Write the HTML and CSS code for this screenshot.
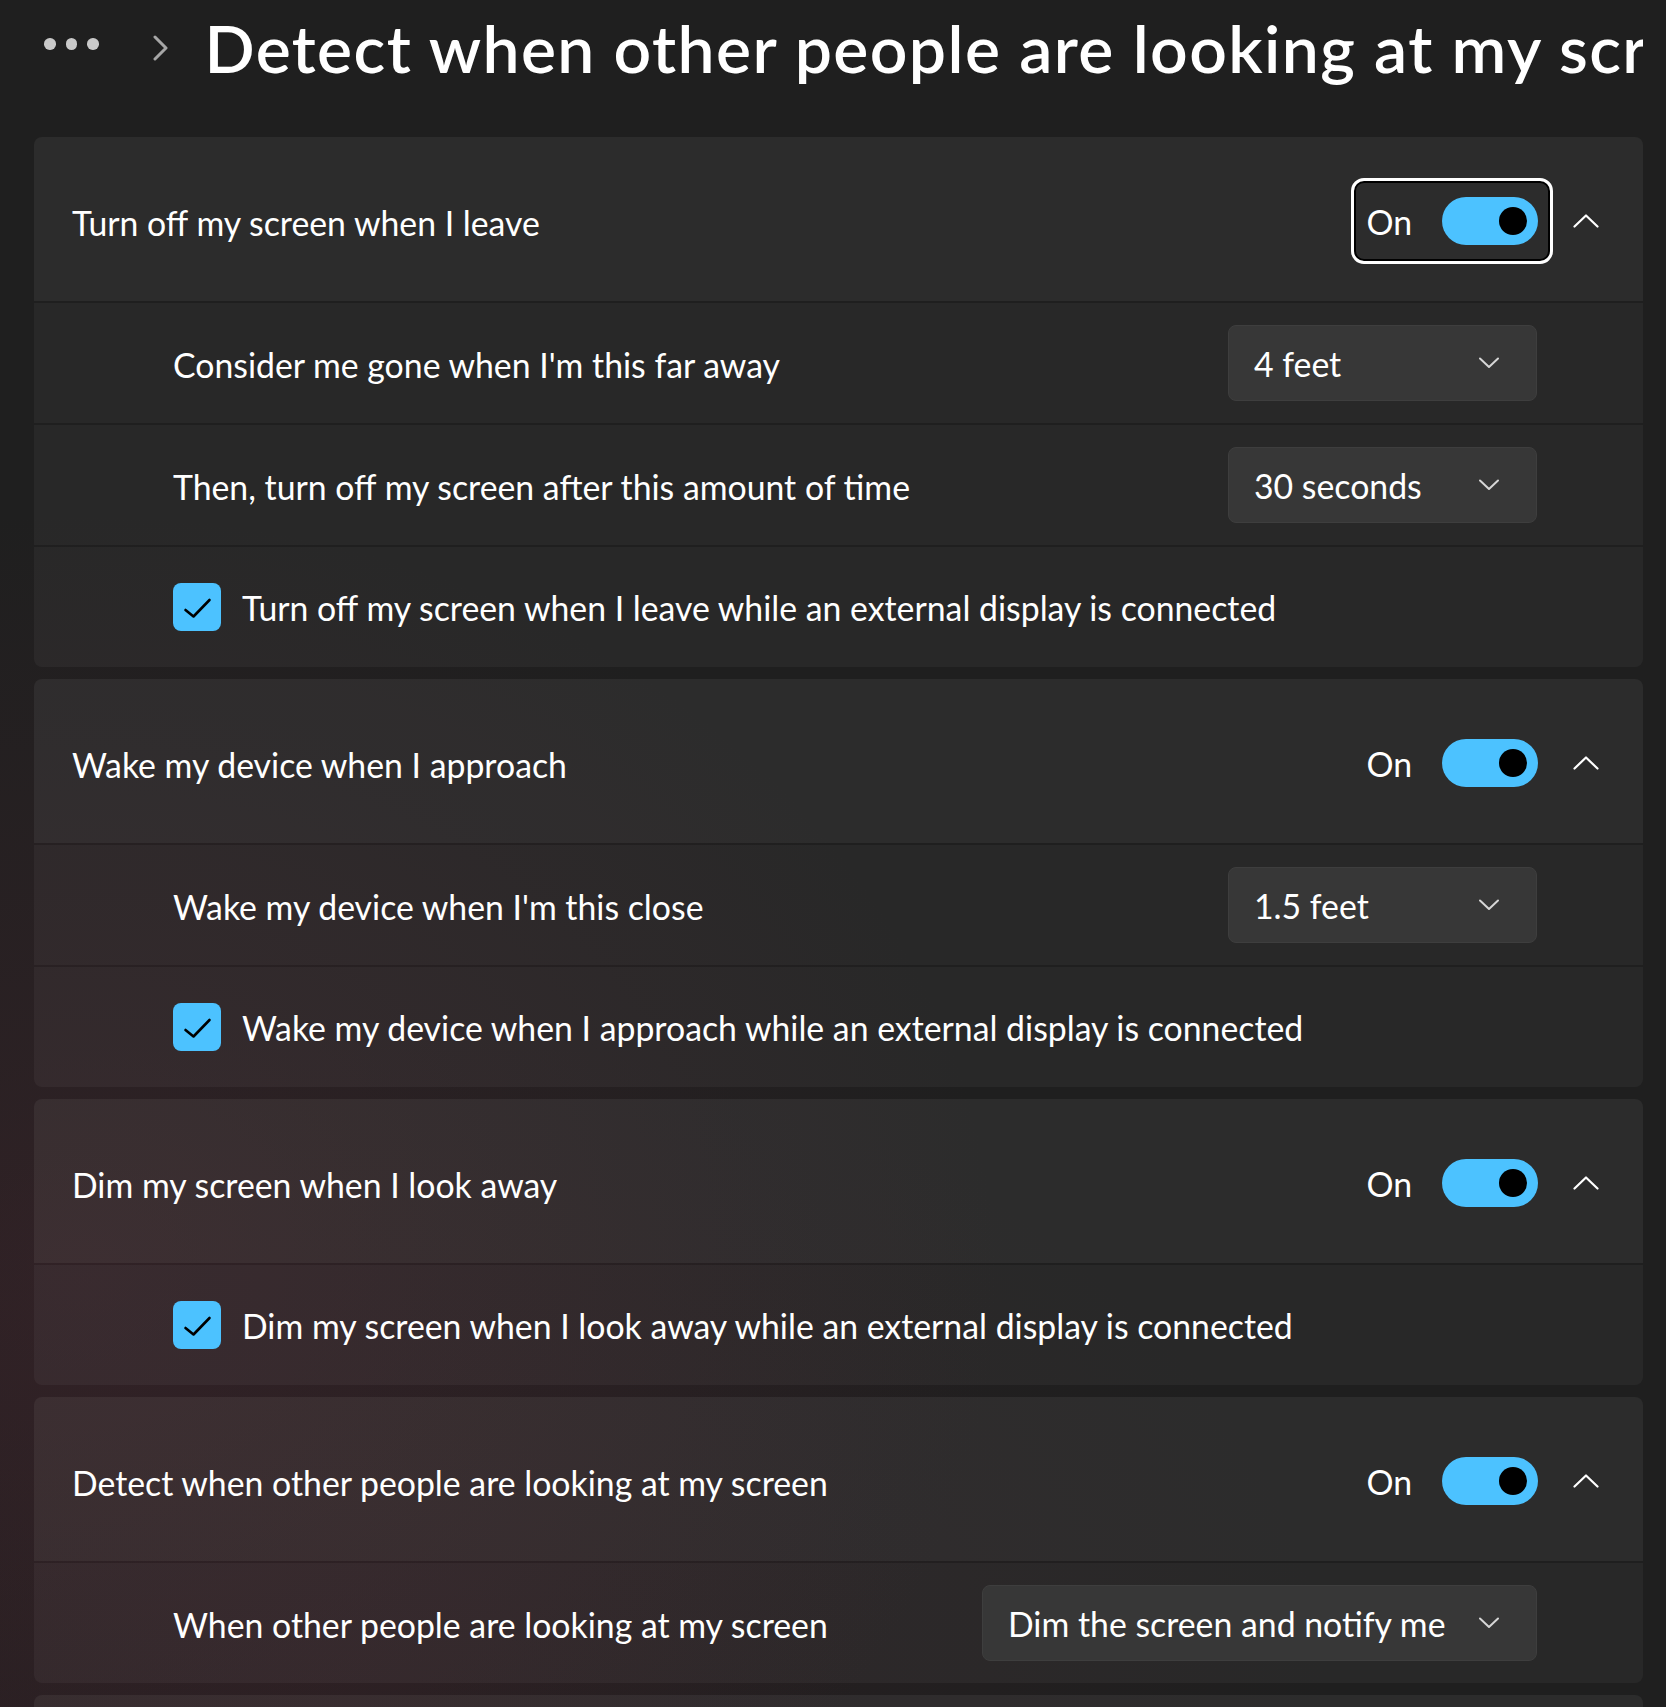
FILE: index.html
```html
<!DOCTYPE html>
<html lang="en">
<head>
<meta charset="utf-8">
<title>Presence sensing</title>
<link rel="stylesheet" href="styles.css">
</head>
<body>
<div class="page">
  <header class="topbar">
    <div class="dots"><span></span><span></span><span></span></div>
    <svg class="crumb-chevron" viewBox="0 0 16 26" width="16" height="26"><path d="M2 2 L13 13 L2 24" fill="none" stroke="#a6a6a6" stroke-width="3" stroke-linecap="round" stroke-linejoin="round"/></svg>
    <h1 class="title">Detect when other people are looking at my screen</h1>
  </header>

  <main class="cards">
    <section class="card">
      <div class="card-head">
        <span class="label">Turn off my screen when I leave</span>
        <div class="controls">
          <div class="toggle-wrap focused"><span class="state">On</span><span class="switch"><span class="knob"></span></span></div>
          <span class="expand"><svg viewBox="0 0 26 14" width="26" height="14"><path d="M1.5 12.5 L13 1.5 L24.5 12.5" fill="none" stroke="#fff" stroke-width="2.2" stroke-linecap="round" stroke-linejoin="round"/></svg></span>
        </div>
      </div>
      <div class="row">
        <span class="label">Consider me gone when I'm this far away</span>
        <div class="dropdown"><span class="value">4 feet</span><svg viewBox="0 0 20 12" width="20" height="12"><path d="M1 1.5 L10 10 L19 1.5" fill="none" stroke="#d6d6d6" stroke-width="2" stroke-linecap="round" stroke-linejoin="round"/></svg></div>
      </div>
      <div class="row">
        <span class="label">Then, turn off my screen after this amount of time</span>
        <div class="dropdown"><span class="value">30 seconds</span><svg viewBox="0 0 20 12" width="20" height="12"><path d="M1 1.5 L10 10 L19 1.5" fill="none" stroke="#d6d6d6" stroke-width="2" stroke-linecap="round" stroke-linejoin="round"/></svg></div>
      </div>
      <div class="row">
        <label class="check"><span class="box"><svg viewBox="0 0 48 48" width="48" height="48"><path d="M12.5 27 L20.5 33.5 L36.5 17" fill="none" stroke="#000" stroke-width="2.6" stroke-linecap="round" stroke-linejoin="round"/></svg></span><span class="label">Turn off my screen when I leave while an external display is connected</span></label>
      </div>
    </section>

    <section class="card">
      <div class="card-head">
        <span class="label">Wake my device when I approach</span>
        <div class="controls">
          <div class="toggle-wrap"><span class="state">On</span><span class="switch"><span class="knob"></span></span></div>
          <span class="expand"><svg viewBox="0 0 26 14" width="26" height="14"><path d="M1.5 12.5 L13 1.5 L24.5 12.5" fill="none" stroke="#fff" stroke-width="2.2" stroke-linecap="round" stroke-linejoin="round"/></svg></span>
        </div>
      </div>
      <div class="row">
        <span class="label">Wake my device when I'm this close</span>
        <div class="dropdown"><span class="value">1.5 feet</span><svg viewBox="0 0 20 12" width="20" height="12"><path d="M1 1.5 L10 10 L19 1.5" fill="none" stroke="#d6d6d6" stroke-width="2" stroke-linecap="round" stroke-linejoin="round"/></svg></div>
      </div>
      <div class="row">
        <label class="check"><span class="box"><svg viewBox="0 0 48 48" width="48" height="48"><path d="M12.5 27 L20.5 33.5 L36.5 17" fill="none" stroke="#000" stroke-width="2.6" stroke-linecap="round" stroke-linejoin="round"/></svg></span><span class="label">Wake my device when I approach while an external display is connected</span></label>
      </div>
    </section>

    <section class="card">
      <div class="card-head">
        <span class="label">Dim my screen when I look away</span>
        <div class="controls">
          <div class="toggle-wrap"><span class="state">On</span><span class="switch"><span class="knob"></span></span></div>
          <span class="expand"><svg viewBox="0 0 26 14" width="26" height="14"><path d="M1.5 12.5 L13 1.5 L24.5 12.5" fill="none" stroke="#fff" stroke-width="2.2" stroke-linecap="round" stroke-linejoin="round"/></svg></span>
        </div>
      </div>
      <div class="row">
        <label class="check"><span class="box"><svg viewBox="0 0 48 48" width="48" height="48"><path d="M12.5 27 L20.5 33.5 L36.5 17" fill="none" stroke="#000" stroke-width="2.6" stroke-linecap="round" stroke-linejoin="round"/></svg></span><span class="label">Dim my screen when I look away while an external display is connected</span></label>
      </div>
    </section>

    <section class="card">
      <div class="card-head">
        <span class="label">Detect when other people are looking at my screen</span>
        <div class="controls">
          <div class="toggle-wrap"><span class="state">On</span><span class="switch"><span class="knob"></span></span></div>
          <span class="expand"><svg viewBox="0 0 26 14" width="26" height="14"><path d="M1.5 12.5 L13 1.5 L24.5 12.5" fill="none" stroke="#fff" stroke-width="2.2" stroke-linecap="round" stroke-linejoin="round"/></svg></span>
        </div>
      </div>
      <div class="row">
        <span class="label">When other people are looking at my screen</span>
        <div class="dropdown wide"><span class="value">Dim the screen and notify me</span><svg viewBox="0 0 20 12" width="20" height="12"><path d="M1 1.5 L10 10 L19 1.5" fill="none" stroke="#d6d6d6" stroke-width="2" stroke-linecap="round" stroke-linejoin="round"/></svg></div>
      </div>
    </section>

    <section class="card card-tail"></section>
  </main>
</div>
</body>
</html>
```

FILE: styles.css
```css
* { box-sizing: border-box; }

html, body {
  margin: 0;
  height: 100%;
}

body {
  background:
    radial-gradient(ellipse 55% 45% at 5% 75%, rgba(74, 38, 48, 0.38), rgba(74, 38, 48, 0) 100%),
    radial-gradient(ellipse 60% 40% at 20% 100%, rgba(60, 32, 40, 0.3), rgba(60, 32, 40, 0) 100%),
    #1f1f1f;
  color: #ffffff;
  font-family: "Lato", "Noto Sans", sans-serif;
  overflow: hidden;
}

.page {
  width: 1666px;
  height: 1707px;
  overflow: hidden;
  padding: 0 23px 0 34px;
}

/* top breadcrumb */
.topbar {
  height: 96px;
  display: flex;
  align-items: center;
  padding-left: 10px;
}

.dots {
  display: flex;
  gap: 10px;
  margin-top: -8px;
}

.dots span {
  width: 11.5px;
  height: 11.5px;
  border-radius: 50%;
  background: #c9c9c9;
}

.crumb-chevron {
  margin-left: 54px;
  flex: none;
}

.title {
  margin: 0 0 0 36px;
  font-size: 66px;
  font-weight: 600;
  letter-spacing: 1.4px;
  white-space: nowrap;
  overflow: hidden;
  flex: 1;
  min-width: 0;
  line-height: 1.2;
}

/* cards */
.cards {
  margin-top: 41px;
  display: flex;
  flex-direction: column;
  gap: 12px;
}

.card {
  border-radius: 8px;
  overflow: hidden;
  display: flex;
  flex-direction: column;
  gap: 2px;
}

.card-head {
  height: 164px;
  background: rgba(255, 255, 255, 0.058);
  display: flex;
  align-items: center;
  justify-content: space-between;
  padding: 4px 37px 0 38px;
}

.label {
  font-size: 33.8px;
  line-height: 1.2;
  padding-top: 5px;
  color: #ffffff;
}

.controls {
  display: flex;
  align-items: center;
  gap: 13px;
}

.toggle-wrap {
  display: flex;
  align-items: center;
  gap: 30px;
  padding: 16px 12px 16px 12px;
  border: 3px solid transparent;
  border-radius: 13px;
}

.toggle-wrap.focused {
  border-color: #ffffff;
  box-shadow: inset 0 0 0 2px #000000;
}

.state {
  font-size: 33.8px;
  line-height: 1.2;
  padding-top: 2px;
}

.switch {
  width: 96px;
  height: 48px;
  border-radius: 24px;
  background: #4cc2ff;
  display: flex;
  align-items: center;
  justify-content: flex-end;
  padding: 0 11px;
}

.knob {
  width: 28px;
  height: 28px;
  border-radius: 50%;
  background: #000000;
}

.expand {
  width: 40px;
  height: 40px;
  display: flex;
  align-items: center;
  justify-content: center;
}

.row {
  height: 120px;
  background: rgba(255, 255, 255, 0.042);
  display: flex;
  align-items: center;
  justify-content: space-between;
  padding: 0 106px 0 139px;
}

.dropdown {
  min-width: 309px;
  height: 76px;
  border-radius: 8px;
  background: #373737;
  border: 1px solid #3e3e3e;
  display: flex;
  align-items: center;
  justify-content: space-between;
  padding: 0 37px 0 25px;
}

.dropdown.wide {
  width: 555px;
}

.dropdown .value {
  font-size: 33.8px;
  line-height: 1.2;
  padding-top: 2px;
}

.check {
  display: flex;
  align-items: center;
  gap: 21px;
}

.check .label {
  padding-top: 3px;
}

.box {
  width: 48px;
  height: 48px;
  border-radius: 8px;
  background: #4cc2ff;
  display: block;
  flex: none;
}

.box svg {
  display: block;
}

.card-tail {
  height: 60px;
  background: rgba(255, 255, 255, 0.058);
}
```
